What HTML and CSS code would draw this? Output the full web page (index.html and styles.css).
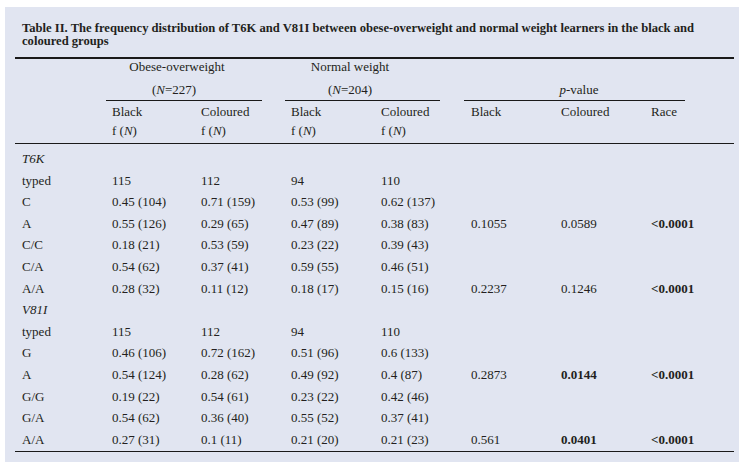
FILE: index.html
```html
<!DOCTYPE html>
<html>
<head>
<meta charset="utf-8">
<link rel="stylesheet" href="styles.css">
</head>
<body>
<div class="panel">
  <div class="title">Table II. The frequency distribution of T6K and V81I between obese-overweight and normal weight learners in the black and<br>coloured groups</div>
  <table class="data">
    <colgroup>
      <col class="c90"><col class="c90"><col class="c90"><col class="c90"><col class="c90"><col class="c90"><col class="c90"><col class="c89">
    </colgroup>
    <thead>
      <tr class="h1">
        <td></td>
        <td colspan="2" class="grp g-obese">Obese-overweight</td>
        <td colspan="2" class="grp g-normal">Normal weight</td>
        <td colspan="3"></td>
      </tr>
      <tr class="h2">
        <td></td>
        <td colspan="2" class="rulecell"><div class="rule r-obese">(<i>N</i>=227)</div></td>
        <td colspan="2" class="rulecell"><div class="rule r-normal">(<i>N</i>=204)</div></td>
        <td colspan="3" class="rulecell"><div class="rule r-p"><i>p</i>-value</div></td>
      </tr>
      <tr class="h3">
        <td></td><td>Black</td><td>Coloured</td><td>Black</td><td>Coloured</td><td>Black</td><td>Coloured</td><td>Race</td>
      </tr>
      <tr class="h4">
        <td></td><td>f (<i>N</i>)</td><td>f (<i>N</i>)</td><td>f (<i>N</i>)</td><td>f (<i>N</i>)</td><td></td><td></td><td></td>
      </tr>
    </thead>
    <tbody>
      <tr class="first"><td><i>T6K</i></td><td></td><td></td><td></td><td></td><td></td><td></td><td></td></tr>
      <tr><td>typed</td><td>115</td><td>112</td><td>94</td><td>110</td><td></td><td></td><td></td></tr>
      <tr><td>C</td><td>0.45 (104)</td><td>0.71 (159)</td><td>0.53 (99)</td><td>0.62 (137)</td><td></td><td></td><td></td></tr>
      <tr><td>A</td><td>0.55 (126)</td><td>0.29 (65)</td><td>0.47 (89)</td><td>0.38 (83)</td><td>0.1055</td><td>0.0589</td><td><b>&lt;0.0001</b></td></tr>
      <tr><td>C/C</td><td>0.18 (21)</td><td>0.53 (59)</td><td>0.23 (22)</td><td>0.39 (43)</td><td></td><td></td><td></td></tr>
      <tr><td>C/A</td><td>0.54 (62)</td><td>0.37 (41)</td><td>0.59 (55)</td><td>0.46 (51)</td><td></td><td></td><td></td></tr>
      <tr><td>A/A</td><td>0.28 (32)</td><td>0.11 (12)</td><td>0.18 (17)</td><td>0.15 (16)</td><td>0.2237</td><td>0.1246</td><td><b>&lt;0.0001</b></td></tr>
      <tr><td><i>V81I</i></td><td></td><td></td><td></td><td></td><td></td><td></td><td></td></tr>
      <tr><td>typed</td><td>115</td><td>112</td><td>94</td><td>110</td><td></td><td></td><td></td></tr>
      <tr><td>G</td><td>0.46 (106)</td><td>0.72 (162)</td><td>0.51 (96)</td><td>0.6 (133)</td><td></td><td></td><td></td></tr>
      <tr><td>A</td><td>0.54 (124)</td><td>0.28 (62)</td><td>0.49 (92)</td><td>0.4 (87)</td><td>0.2873</td><td><b>0.0144</b></td><td><b>&lt;0.0001</b></td></tr>
      <tr><td>G/G</td><td>0.19 (22)</td><td>0.54 (61)</td><td>0.23 (22)</td><td>0.42 (46)</td><td></td><td></td><td></td></tr>
      <tr><td>G/A</td><td>0.54 (62)</td><td>0.36 (40)</td><td>0.55 (52)</td><td>0.37 (41)</td><td></td><td></td><td></td></tr>
      <tr class="last"><td>A/A</td><td>0.27 (31)</td><td>0.1 (11)</td><td>0.21 (20)</td><td>0.21 (23)</td><td>0.561</td><td><b>0.0401</b></td><td><b>&lt;0.0001</b></td></tr>
    </tbody>
  </table>
</div>
</body>
</html>
```

FILE: styles.css
```css
html, body {
  margin: 0;
  padding: 0;
  background: #ffffff;
}

body {
  padding: 7px 0 0 5px;
  font-family: "Liberation Serif", "Times New Roman", serif;
  color: #231f20;
}

.panel {
  width: 734px;
  height: 455px;
  background: #e1e5f1;
  box-sizing: border-box;
  padding-top: 15px;
}

.title {
  padding-left: 17px;
  font-weight: bold;
  font-size: 12.6px;
  line-height: 12.5px;
  white-space: nowrap;
}

.data {
  margin: 10px 0 0 10px;
  width: 719px;
  table-layout: fixed;
  border-collapse: separate;
  border-spacing: 0;
  border-top: 2px solid #1a1a1a;
  font-size: 13px;
}

.c90 { width: 90px; }
.c89 { width: 89px; }

.data td {
  padding: 0 0 0 6px;
  white-space: nowrap;
  text-align: left;
  font-weight: normal;
  vertical-align: top;
}

.data td:first-child,
.data td:nth-child(2) {
  padding-left: 7px;
}

/* header row 1: group names */
.data .h1 td {
  line-height: 16px;
  height: 16px;
  padding-bottom: 5px;
}

.data td.grp {
  text-align: center;
  padding-left: 0;
}

.data td.g-obese { padding-right: 36px; }
.data td.g-normal { padding-right: 50px; }

/* header row 2: N values and p-value, with rules */
.data .h2 td {
  height: 21px;
}

.data td.rulecell {
  padding: 0;
}

.rule {
  height: 20px;
  line-height: 20px;
  border-bottom: 1px solid #1a1a1a;
  text-align: center;
}

.r-obese { margin: 0 23px 0 1px; padding-right: 20px; }
.r-normal { margin: 0 25px 0 0; padding-right: 25px; }
.r-p { margin: 0 49px 0 -1px; padding-left: 9px; }

/* header row 3: column names */
.data .h3 td {
  line-height: 19px;
  height: 19px;
  padding-top: 1px;
}

/* header row 4: f(N) */
.data .h4 td {
  line-height: 19px;
  height: 19px;
  padding-bottom: 3px;
  border-bottom: 1px solid #1a1a1a;
}

/* body rows */
.data tbody td {
  line-height: 21.6px;
  height: 21.6px;
}

.data tbody tr.first td { padding-top: 4px; }

.data tbody tr.last td {
  padding-bottom: 1px;
  border-bottom: 1px solid #1a1a1a;
}

.data b { font-weight: bold; }
```
